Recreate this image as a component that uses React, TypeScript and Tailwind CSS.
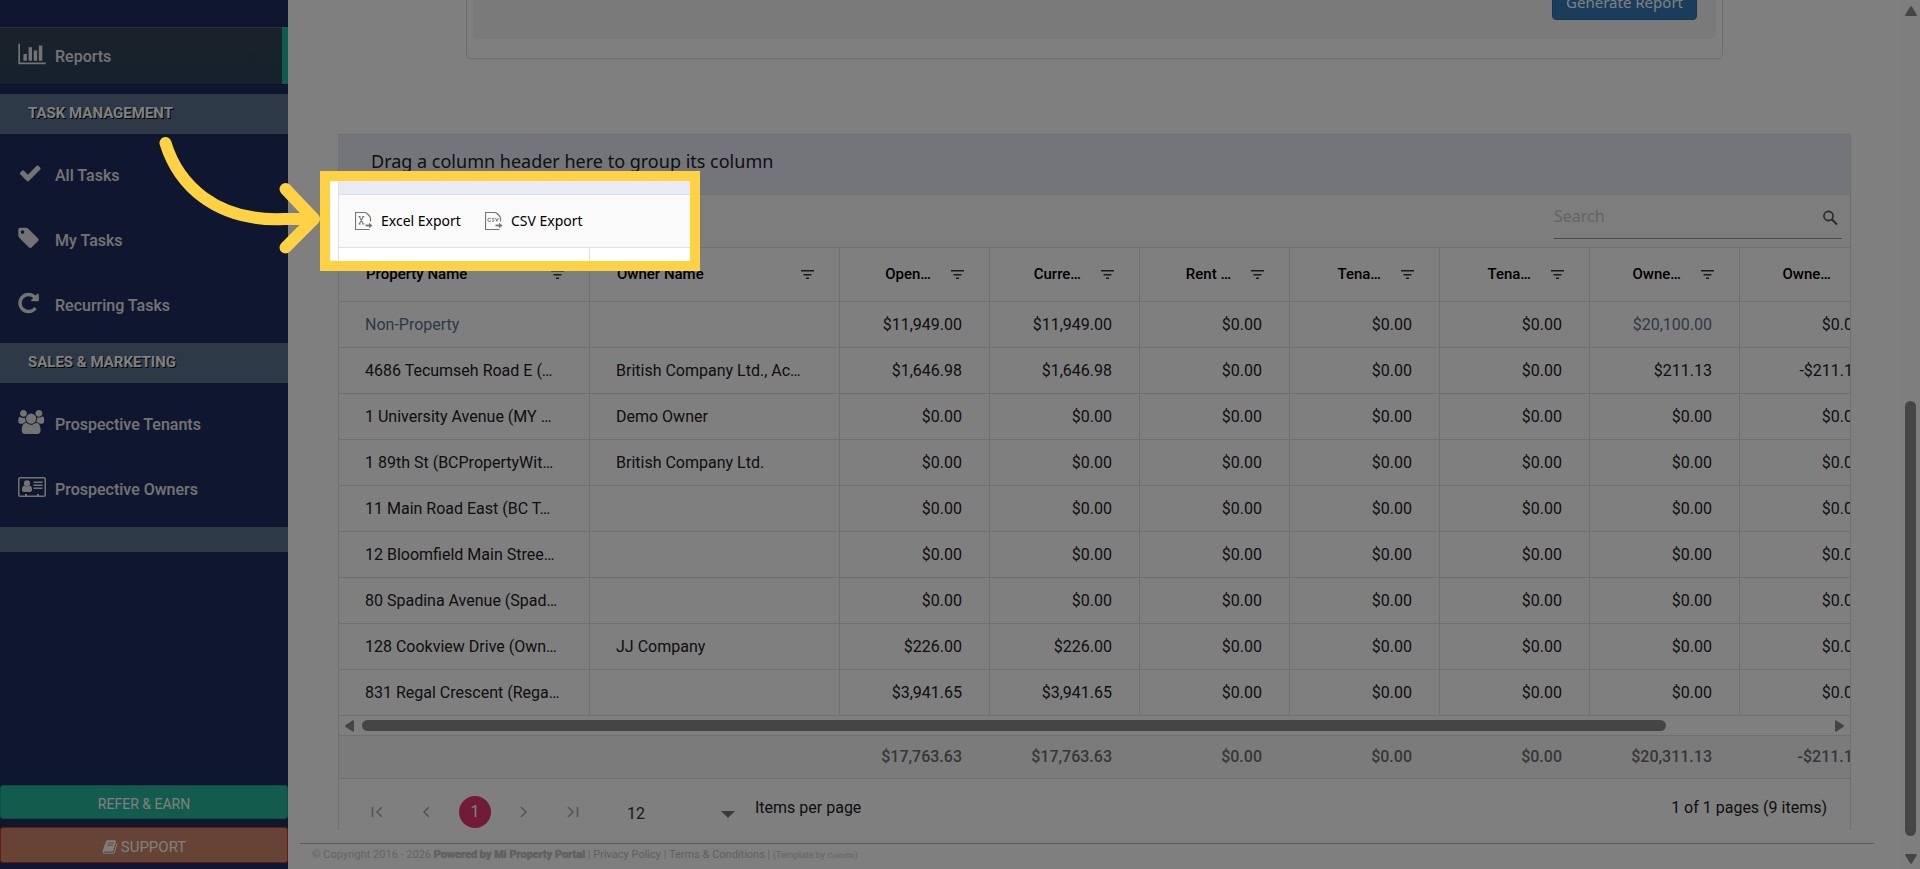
import type { ReactNode } from "react";

const FA = {
  chart:
    "M640 896v512h-256v-512h256zm384-512v1024h-256v-1024h256zm1024 1152v128h-2048v-1536h128v1408h1920zm-640-896v768h-256v-768h256zm384-384v1152h-256v-1152h256z",
  check:
    "M1671 566q0 40-28 68l-724 724-136 136q-28 28-68 28t-68-28l-136-136-362-362q-28-28-28-68t28-68l136-136q28-28 68-28t68 28l294 295 656-657q28-28 68-28t68 28l136 136q28 28 28 68z",
  tag: "M448 448q0-53-37.5-90.5t-90.5-37.5-90.5 37.5-37.5 90.5 37.5 90.5 90.5 37.5 90.5-37.5 37.5-90.5zm1067 576q0 53-37 90l-491 492q-39 37-91 37-53 0-90-37l-715-716q-38-37-64.5-101t-26.5-117v-416q0-52 38-90t90-38h416q53 0 117 26.5t102 64.5l715 714q37 39 37 91z",
  repeat:
    "M1536 256v448q0 26-19 45t-45 19h-448q-42 0-59-40-17-39 14-69l138-138q-148-137-349-137-104 0-198.500 40.500t-163.500 109.500-109.500 163.500-40.500 198.500 40.500 198.500 109.500 163.500 163.500 109.500 198.500 40.500q119 0 225-52t179-147q7-10 23-12 15 0 25 9l137 138q9 8 9.500 20.500t-7.500 22.500q-109 132-264 204.500t-327 72.500q-156 0-298-61t-245-164-164-245-61-298 61-298 164-245 245-164 298-61q147 0 284.500 55.500t244.500 156.500l130-129q29-31 70-14 39 17 39 59z",
  users:
    "M593 896q-162 5-265 128h-134q-82 0-138-40.500t-56-118.500q0-353 124-353 6 0 43.500 21t97.500 42.500 119 21.500q67 0 133-23-5 37-5 66 0 159 93 293zm1071 637q0 120-73 189.500t-194 69.500h-874q-121 0-194-69.500t-73-189.500q0-53 3.500-103.500t14-109 26.500-108.500 43-97.500 62-81 85.500-53.500 111.500-20q10 0 43 21.500t73 48 107 48 135 21.500 135-21.500 107-48 73-48 43-21.500q61 0 111.500 20t85.500 53.500 62 81 43 97.500 26.500 108.500 14 109 3.500 103.500zm-1024-1277q0 106-75 181t-181 75-181-75-75-181 75-181 181-75 181 75 75 181zm704 384q0 159-112.500 271.500t-271.500 112.500-271.500-112.500-112.500-271.500 112.500-271.500 271.500-112.500 271.500 112.500 112.500 271.500zm576 225q0 78-56 118.500t-138 40.500h-134q-103-123-265-128 93-134 93-293 0-29-5-66 66 23 133 23 59 0 119-21.500t97.500-42.500 43.500-21q124 0 124 353zm-128-609q0 106-75 181t-181 75-181-75-75-181 75-181 181-75 181 75 75 181z",
  book: "M1703 478q40 57 18 129l-275 906q-19 64-76.500 107.500t-122.500 43.500h-923q-77 0-148.500-53.500t-99.500-131.500q-24-67-2-127 0-4 3-27t4-37q1-8-3-21.500t-3-19.500q2-11 8-21t16.500-23.500 16.500-23.500q23-38 45-91.500t30-91.500q3-10 .5-30t-.5-28q3-11 17-28t17-23q21-36 42-92t25-90q1-9-2.500-32t.5-28q4-13 22-30.500t22-22.500q19-26 42.500-84.500t27.500-96.500q1-8-3-25.500t-2-26.500q2-8 9-18t18-23 17-21q8-12 16.500-30.500t15-35 16-36 19.500-32 26.500-23.500 36-11.500 47.500 5.500l-1 3q38-9 51-9h761q74 0 114 56t18 130l-274 906q-36 119-71.500 153.500t-128.500 34.500h-869q-27 0-38 15-11 16-1 43 24 70 144 70h923q29 0 56-15.500t35-41.500l300-987q7-22 5-57 38 15 59 43zm-1064 2q-4 13 2 22.500t20 9.500h608q13 0 25.500-9.500t16.500-22.500l21-64q4-13-2-22.500t-20-9.500h-608q-13 0-25.500 9.500t-16.500 22.500zm-83 256q-4 13 2 22.500t20 9.500h608q13 0 25.500-9.500t16.500-22.500l21-64q4-13-2-22.500t-20-9.500h-608q-13 0-25.500 9.500t-16.500 22.500z",
};

function Glyph({ d }: { d: string }) {
  return (
    <svg viewBox="0 0 2048 1792" className="h-6 w-7 shrink-0 fill-current" aria-hidden="true">
      <path d={d} />
    </svg>
  );
}

function AddressCard() {
  return (
    <svg viewBox="0 0 28 24" className="h-6 w-7 shrink-0 fill-current" aria-hidden="true">
      <path
        fillRule="evenodd"
        d="M2 2h24a2 2 0 0 1 2 2v16a2 2 0 0 1-2 2H2a2 2 0 0 1-2-2V4a2 2 0 0 1 2-2Zm-.5 2v16.500h5.500V19h2v1.500h10V19h2v1.500h5.500V4a.5.5 0 0 0-.5-.5H2a.5.5 0 0 0-.5.5Z"
      />
      <circle cx="9" cy="8.300" r="3.100" />
      <path d="M6.500 10.500c-2 .5-2.500 2-2.500 4.500 0 1.200.8 2 2 2h6c1.200 0 2-.8 2-2 0-2.500-.5-4-2.500-4.500-1.500 1.300-3.500 1.300-5 0Z" />
      <path d="M15.500 6.500h9V8h-9zM15.500 9.500h9V11h-9zM15.500 12.500h9V14h-9z" />
    </svg>
  );
}

function NavItem({ icon, label, active }: { icon: ReactNode; label: string; active?: boolean }) {
  return (
    <a
      href="#"
      className={
        "flex h-[57px] items-center gap-[9px] pl-[18px] text-base font-medium text-[#e7e7e7] " +
        (active
          ? "border-r-[6px] border-[#1abb9c] bg-linear-to-b from-[#334556] to-[#2c4257] shadow-[0_1px_0_rgba(0,0,0,0.25),inset_0_1px_0_rgba(255,255,255,0.16)]"
          : "")
      }
    >
      <span className="pb-1">{icon}</span>
      <span className="pt-[3px]">{label}</span>
    </a>
  );
}

function SectionTitle({ children }: { children: ReactNode }) {
  return (
    <h3 className="flex h-10 items-center bg-[#5a738e] pb-px pl-7 text-[15px] font-bold text-white uppercase [text-shadow:1px_1px_#000]">
      {children}
    </h3>
  );
}

function Sidebar() {
  return (
    <aside className="flex w-72 shrink-0 flex-col bg-[#1f2f60] pt-[27px] pb-[6px]">
      <nav aria-label="Main">
        <div className="pb-[10px]">
          <NavItem icon={<Glyph d={FA.chart} />} label="Reports" active />
        </div>
        <SectionTitle>Task Management</SectionTitle>
        <div className="flex flex-col gap-2 pt-3 pb-[10px]">
          <NavItem icon={<Glyph d={FA.check} />} label="All Tasks" />
          <NavItem icon={<Glyph d={FA.tag} />} label="My Tasks" />
          <NavItem icon={<Glyph d={FA.repeat} />} label="Recurring Tasks" />
        </div>
        <SectionTitle>Sales &amp; Marketing</SectionTitle>
        <div className="flex flex-col gap-2 pt-3 pb-[10px]">
          <NavItem icon={<Glyph d={FA.users} />} label="Prospective Tenants" />
          <NavItem icon={<AddressCard />} label="Prospective Owners" />
        </div>
        <div className="h-[25px] bg-[#5a738e]" />
      </nav>
      <div className="mt-auto flex flex-col gap-2">
        <button className="h-[34px] rounded-[3px] border border-[#169f85] bg-[#26b99a] pt-1 text-sm text-white">
          REFER &amp; EARN
        </button>
        <button className="flex h-9 items-center justify-center gap-[3px] rounded-[3px] border border-[#d9302c] bg-[#cc866a] pt-1 text-[15px] text-white">
          <svg viewBox="0 0 1792 1792" className="size-4 fill-current" aria-hidden="true">
            <path d={FA.book} />
          </svg>
          SUPPORT
        </button>
      </div>
    </aside>
  );
}

function ExportIcon({ kind }: { kind: "excel" | "csv" }) {
  return (
    <svg viewBox="0 0 18 18" className="size-[18px]" fill="none" stroke="#757575" aria-hidden="true">
      <path d="M15.500 9.500V6.500Q15.500 5 14 3.500L12.500 2Q11 .5 9.500 .5H.5v17h14" strokeWidth="1.200" />
      <path d="M10.500 13.500h5" strokeWidth="1.800" />
      <path d="M14 10.800l3.500 2.700L14 16.200z" fill="#757575" stroke="none" />
      {kind === "excel" ? (
        <path d="M4.300 4.500l4 7.500M8.300 4.500l-4 7.500M3.500 4.500h2M7.300 4.500h2M3.500 12h2M7.300 12h2" strokeWidth="1.100" />
      ) : (
        <path
          d="M5.800 6.800c-1.700-1.200-3-.4-3 1s1.300 2.200 3 1M9.300 6.400c-2.200-.6-2.600.8-1.200 1.300s1.200 2.200-1.300 1.500M10.500 6l1.400 3.200L13.300 6"
          strokeWidth="1"
        />
      )}
    </svg>
  );
}

function FilterIcon() {
  return (
    <svg viewBox="0 0 13 9" className="h-[9px] w-[13px] shrink-0 fill-[#333]" aria-hidden="true">
      <path d="M0 0h13v1.500H0zM2.500 4h8v1.500h-8zM5 7.500h3V9H5z" />
    </svg>
  );
}

const COLUMNS = ["Property Name", "Owner Name", "Open…", "Curre…", "Rent …", "Tena…", "Tena…", "Owne…", "Owne…"];

const Z = "$0.00";
const ROWS = [
  ["Non-Property", "", "$11,949.00", "$11,949.00", Z, Z, Z, "$20,100.00", Z],
  ["4686 Tecumseh Road E (…", "British Company Ltd., Ac…", "$1,646.98", "$1,646.98", Z, Z, Z, "$211.13", "-$211.13"],
  ["1 University Avenue (MY …", "Demo Owner", Z, Z, Z, Z, Z, Z, Z],
  ["1 89th St (BCPropertyWit…", "British Company Ltd.", Z, Z, Z, Z, Z, Z, Z],
  ["11 Main Road East (BC T…", "", Z, Z, Z, Z, Z, Z, Z],
  ["12 Bloomfield Main Stree…", "", Z, Z, Z, Z, Z, Z, Z],
  ["80 Spadina Avenue (Spad…", "", Z, Z, Z, Z, Z, Z, Z],
  ["128 Cookview Drive (Own…", "JJ Company", "$226.00", "$226.00", Z, Z, Z, Z, Z],
  ["831 Regal Crescent (Rega…", "", "$3,941.65", "$3,941.65", Z, Z, Z, Z, Z],
];
const TOTALS = ["", "", "$17,763.63", "$17,763.63", Z, Z, Z, "$20,311.13", "-$211.13"];

function Columns() {
  return (
    <colgroup>
      {COLUMNS.map((_, i) => (
        <col key={i} className={i === 0 ? "w-[251px]" : i === 1 ? "w-[250px]" : "w-[150px]"} />
      ))}
    </colgroup>
  );
}

function Cell({ value, col }: { value: string; col: number }) {
  const linked = value === "Non-Property" || value === "$20,100.00";
  return (
    <td
      className={
        "h-[46px] overflow-hidden border-r border-b border-[#e0e0e0] whitespace-nowrap " +
        (col < 2 ? "pl-[26px] text-left" : "pr-[27px] text-right")
      }
    >
      {linked ? (
        <a href="#" className="text-[#5a738e]">
          {value}
        </a>
      ) : (
        value
      )}
    </td>
  );
}

function Toolbar() {
  return (
    <div className="flex h-[53px] items-center justify-between border-b border-[#e0e0e0] bg-[#fafafa] pr-2 pl-4 font-['Noto_Sans',sans-serif]">
      <div className="flex gap-6">
        <button className="flex items-center gap-2 text-sm text-black">
          <ExportIcon kind="excel" />
          Excel Export
        </button>
        <button className="flex items-center gap-2 text-sm text-black">
          <ExportIcon kind="csv" />
          CSV Export
        </button>
      </div>
      <div className="flex h-9 w-72 items-center border-b border-[#949494] pr-1 pb-[6px]">
        <input
          type="text"
          aria-label="Search"
          placeholder="Search"
          className="min-w-0 flex-1 bg-transparent pb-1 text-base outline-none placeholder:text-[#c8c8c8]"
        />
        <svg viewBox="0 0 16 16" className="size-4 fill-none stroke-[#505050]" aria-hidden="true">
          <circle cx="6.500" cy="6" r="4.600" strokeWidth="1.600" />
          <path d="M10 9.500l5 5" strokeWidth="1.900" />
        </svg>
      </div>
    </div>
  );
}

function HorizontalScroll() {
  return (
    <div className="flex h-5 items-center border-b border-[#e0e0e0] px-[6px]">
      <svg viewBox="0 0 9 12" className="h-3 w-[9px] fill-[#8b8b8b]" aria-hidden="true">
        <path d="M9 1v10q0 1-1 .7L.6 7q-1-1 0-2L8 .3Q9 0 9 1z" />
      </svg>
      <div className="mx-2 flex-1">
        <div className="h-[11px] w-[89%] rounded-full bg-[#8b8b8b]" />
      </div>
      <svg viewBox="0 0 9 12" className="h-3 w-[9px] fill-[#8b8b8b]" aria-hidden="true">
        <path d="M0 1v10q0 1 1 .7L8.400 7q1-1 0-2L1 .3Q0 0 0 1z" />
      </svg>
    </div>
  );
}

function PagerButton({ label, d }: { label: string; d: string }) {
  return (
    <button aria-label={label} className="flex size-8 items-center justify-center">
      <svg viewBox="0 0 12 12" className="size-3 fill-none stroke-[#acacac]" strokeWidth="1.700" aria-hidden="true">
        <path d={d} />
      </svg>
    </button>
  );
}

function Pager() {
  return (
    <div className="flex h-[51px] items-center justify-between pt-[14px] pr-[23px] pl-[22px] text-base text-[#212121]">
      <div className="flex items-center">
        <div className="flex items-center gap-[17px]">
          <PagerButton label="First page" d="M1.500 1v10M11 1L6 6l5 5" />
          <PagerButton label="Previous page" d="M9 1L4 6l5 5" />
          <button className="size-8 rounded-full bg-[#e43673] text-white">1</button>
          <PagerButton label="Next page" d="M3 1l5 5-5 5" />
          <PagerButton label="Last page" d="M10.500 1v10M1 1l5 5-5 5" />
        </div>
        <div className="relative ml-[38px] flex w-[108px] items-center">
          <select
            aria-label="Items per page"
            defaultValue="12"
            className="w-full appearance-none bg-transparent pt-1 text-[#333]"
          >
            <option>12</option>
          </select>
          <svg
            viewBox="0 0 14 7"
            className="pointer-events-none absolute right-0 bottom-2 h-[7px] w-[14px] fill-[#757575]"
            aria-hidden="true"
          >
            <path d="M0 0h14L7 7z" />
          </svg>
        </div>
        <span className="ml-5 pb-2">Items per page</span>
      </div>
      <span className="pb-2">1 of 1 pages (9 items)</span>
    </div>
  );
}

function Grid() {
  return (
    <section className="mx-[50px] mt-[75px] border border-b-0 border-[#e0e0e0] text-base text-[#212121]">
      <div className="flex h-[60px] items-center border-b border-[#e0e0e0] bg-[#e8eaf6] pb-2 pl-8 font-['Noto_Sans',sans-serif] text-lg">
        Drag a column header here to group its column
      </div>
      <Toolbar />
      <div className="overflow-hidden">
        <table className="w-[1551px] table-fixed border-separate border-spacing-0">
          <Columns />
          <thead>
            <tr>
              {COLUMNS.map((name, i) => (
                <th
                  key={i}
                  scope="col"
                  className="h-[54px] border-r border-b border-[#e0e0e0] pr-[25px] pl-[27px] text-[15px] font-medium text-black"
                >
                  <div className={"flex items-center " + (i < 2 ? "justify-between" : "justify-end gap-5")}>
                    {name}
                    <FilterIcon />
                  </div>
                </th>
              ))}
            </tr>
          </thead>
          <tbody>
            {ROWS.map((row) => (
              <tr key={row[0]}>
                {row.map((value, i) => (
                  <Cell key={i} value={value} col={i} />
                ))}
              </tr>
            ))}
          </tbody>
        </table>
      </div>
      <HorizontalScroll />
      <div className="overflow-hidden border-b border-[#e0e0e0] bg-[#f7f7f7]">
        <table className="w-[1551px] table-fixed text-[#6e6e6e]">
          <Columns />
          <tbody>
            <tr>
              {TOTALS.map((value, i) => (
                <td key={i} className="h-[42px] pr-7 text-right font-medium">
                  {value}
                </td>
              ))}
            </tr>
          </tbody>
        </table>
      </div>
      <Pager />
    </section>
  );
}

function Footer() {
  return (
    <footer className="mt-[13px] mr-[27px] ml-3 border-t border-[#b5b5b5] pt-px pl-3 text-[11px] leading-5 text-[#c8c8c8]">
      © Copyright 2016 - 2026{" "}
      <a href="#" className="font-bold text-[#c4c4c4] [text-shadow:0_0_1px_#aaa]">
        Powered by Mi Property Portal
      </a>{" "}
      |{" "}
      <a href="#" className="text-[#c0c0c0]">
        Privacy Policy
      </a>{" "}
      |{" "}
      <a href="#" className="text-[#c0c0c0]">
        Terms &amp; Conditions
      </a>{" "}
      |{" "}
      <small className="text-[9px]">
        (Template by{" "}
        <a href="#" className="text-[8px]">
          Colorlib
        </a>
        )
      </small>
    </footer>
  );
}

function PageScrollbar() {
  return (
    <div className="flex w-[19px] shrink-0 flex-col items-center bg-[#fcfcfc] pt-[6px] pb-[5px]" aria-hidden="true">
      <svg viewBox="0 0 12 10" className="h-[10px] w-3 fill-[#8b8b8b]">
        <path d="M1 10h10q1.500 0 .7-1.300L7 .7q-1-1-2 0L.3 8.700Q-.5 10 1 10z" />
      </svg>
      <div className="flex w-[11px] flex-1 flex-col justify-end pb-[18px]">
        <div className="h-[53%] rounded-full bg-[#8b8b8b]" />
      </div>
      <svg viewBox="0 0 12 10" className="h-[10px] w-3 fill-[#8b8b8b]">
        <path d="M1 0h10q1.500 0 .7 1.300L7 9.300q-1 1-2 0L.3 1.300Q-.5 0 1 0z" />
      </svg>
    </div>
  );
}

function Spotlight() {
  return (
    <div className="pointer-events-none absolute inset-0 overflow-hidden" aria-hidden="true">
      <div className="absolute top-[171px] left-80 h-[100px] w-[380px] border-10 border-[#ffd145] shadow-[0_0_0_3000px_rgba(0,0,0,0.5)]" />
      <svg
        viewBox="0 0 170 130"
        className="absolute top-[130px] left-[155px] h-[130px] w-[170px] fill-none stroke-[#ffd145]"
        strokeWidth="12"
        strokeLinecap="round"
        strokeLinejoin="round"
      >
        <path d="M10.500 13C23 54 60 92 129 89h30M130.500 59l28.500 30-28.500 28.500" />
      </svg>
    </div>
  );
}

export default function App() {
  return (
    <div className="relative flex min-h-screen overflow-hidden bg-white font-[Roboto,sans-serif]">
      <Sidebar />
      <main className="min-w-0 flex-1">
        <div className="mr-[178px] ml-[178px] flex h-[59px] flex-col rounded-b-[5px] border border-t-0 border-[#dcdcdc] px-[6px] shadow-[0_1px_1px_rgba(0,0,0,0.05)]">
          <div className="flex h-[39px] items-end justify-end rounded-b bg-[#f5f5f5] pr-[19px] pb-[19px]">
            <button className="-mt-4 h-9 rounded-[4px] border border-[#2e6da4] bg-[#337ab7] px-[13px] font-['Noto_Sans',sans-serif] text-[15px] leading-8 text-white">
              Generate Report
            </button>
          </div>
        </div>
        <Grid />
        <Footer />
      </main>
      <PageScrollbar />
      <Spotlight />
    </div>
  );
}
